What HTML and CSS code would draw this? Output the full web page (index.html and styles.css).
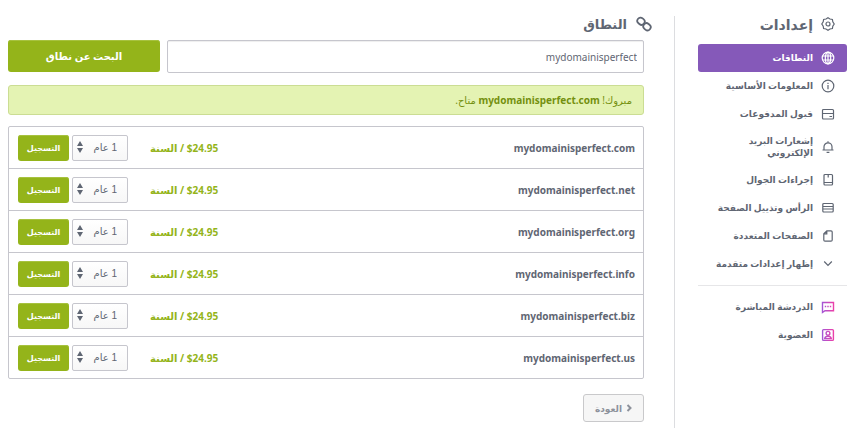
FILE: index.html
```html
<!DOCTYPE html>
<html lang="ar" dir="rtl">
<head>
  <meta charset="UTF-8" />
  <meta name="viewport" content="width=device-width, initial-scale=1.0"/>
  <title>النطاق</title>
  <link rel="stylesheet" href="styles.css">
</head>

<body>
  <div class="page">
    <nav class="sidebar">
      <h2 class="sidebar-title">
        <svg class="icon" viewBox="0 0 14 14"><path d="M7 .7 9 2l2.4.4.4 2.5L13.2 7l-1.4 2.1-.4 2.5L9 12l-2 1.3L5 12l-2.4-.4-.4-2.5L.8 7l1.4-2.1.4-2.5L5 2z"/><circle cx="7" cy="7" r="2"/></svg>
        <span>إعدادات</span>
      </h2>
      <ul class="menu">
        <li><a class="menu-item active" href="#">
          <svg class="icon" viewBox="0 0 14 14"><circle cx="7" cy="7" r="5.8"/><ellipse cx="7" cy="7" rx="2.7" ry="5.8"/><path d="M1.6 5h10.8M1.6 9h10.8M7 1.2v11.6"/></svg>
          <span>النطاقات</span>
        </a></li>
        <li><a class="menu-item" href="#">
          <svg class="icon" viewBox="0 0 14 14"><circle cx="7" cy="7" r="5.8"/><path d="M7 6v4.2M7 3.7v1.2"/></svg>
          <span>المعلومات الأساسية</span>
        </a></li>
        <li><a class="menu-item" href="#">
          <svg class="icon" viewBox="0 0 14 14"><rect x="1.5" y="2.5" width="11" height="9.5" rx="1"/><path d="M1.5 6.5h11M8.500 9.500h2.500"/></svg>
          <span>قبول المدفوعات</span>
        </a></li>
        <li><a class="menu-item" href="#">
          <svg class="icon" viewBox="0 0 14 14"><path d="M1.5 10h11M3 10V6.800a4 4 0 0 1 8 0V10M7 2.800V1.300M5.600 12.300h2.800"/></svg>
          <span>إشعارات البريد<br>الإلكتروني</span>
        </a></li>
        <li><a class="menu-item" href="#">
          <svg class="icon" viewBox="0 0 14 14"><rect x="3" y="1.5" width="8.500" height="10.500" rx="1"/><path d="M3 9.500h8.500M7.200 2v2.500"/></svg>
          <span>إجراءات الجوال</span>
        </a></li>
        <li><a class="menu-item" href="#">
          <svg class="icon" viewBox="0 0 14 14"><rect x="1.8" y="2.5" width="10.4" height="8.500" rx="1"/><path d="M2 5.500h10M2 8h10"/></svg>
          <span>الرأس وتذييل الصفحة</span>
        </a></li>
        <li><a class="menu-item" href="#">
          <svg class="icon" viewBox="0 0 14 14"><path d="M5.8 1.8H10a1.2 1.2 0 0 1 1.2 1.2v8a1.2 1.2 0 0 1-1.2 1.2H4A1.2 1.2 0 0 1 2.8 11V4.8zM5.8 1.8v3h-3"/></svg>
          <span>الصفحات المتعددة</span>
        </a></li>
        <li><a class="menu-item" href="#">
          <svg class="icon" viewBox="0 0 14 14"><path d="m3.2 4.5 3.8 4 3.8-4"/></svg>
          <span>إظهار إعدادات متقدمة</span>
        </a></li>
      </ul>
      <ul class="menu menu-extra">
        <li><a class="menu-item" href="#">
          <svg class="icon icon-pink" viewBox="0 0 14 14">
            <defs><linearGradient id="pink" gradientUnits="userSpaceOnUse" x1="1" y1="0" x2="13" y2="0"><stop offset="0" stop-color="#a157d6"/><stop offset="1" stop-color="#ee3fa8"/></linearGradient></defs>
            <path d="M1.5 12.5v-10h11v8.2H4zM3.8 6.5h1.4M6.3 6.5h1.4M8.8 6.5h1.4"/>
          </svg>
          <span>الدردشة المباشرة</span>
        </a></li>
        <li><a class="menu-item" href="#">
          <svg class="icon icon-pink" viewBox="0 0 14 14"><rect x="1.6" y="1.6" width="10.8" height="10.8" rx="1"/><circle cx="7" cy="5.3" r="1.9"/><path d="M3.7 10.6c.4-1.7 1.6-2.3 3.3-2.3s2.9.6 3.3 2.3z"/></svg>
          <span>العضوية</span>
        </a></li>
      </ul>
    </nav>

    <main class="content">
      <h1 class="title">
        <svg class="link-icon" viewBox="0 0 16 16"><rect x="1.200" y="2" width="7.600" height="6.400" rx="3.200" transform="rotate(40 5 5.200)"/><rect x="7.200" y="7.600" width="7.600" height="6.400" rx="3.200" transform="rotate(40 11 10.800)"/></svg>
        <span>النطاق</span>
      </h1>

      <form class="search">
        <input class="search-input" type="text" value="mydomainisperfect" aria-label="النطاق" />
        <button class="btn search-btn" type="button">البحث عن نطاق</button>
      </form>

      <p class="notice">مبروك! <strong>mydomainisperfect.com</strong> متاح.</p>

      <div class="results">
        <table class="domains">
          <tr>
            <td class="name">mydomainisperfect.com</td>
            <td class="price">$24.95 / السنة</td>
            <td class="years"><div class="select"><select aria-label="mydomainisperfect.com"><option>1 عام</option></select><svg viewBox="0 0 6 12"><path d="M3 0 6 5H0zM3 12 0 7h6z"/></svg></div></td>
            <td class="action"><button class="btn" type="button">التسجيل</button></td>
          </tr>
          <tr>
            <td class="name">mydomainisperfect.net</td>
            <td class="price">$24.95 / السنة</td>
            <td class="years"><div class="select"><select aria-label="mydomainisperfect.net"><option>1 عام</option></select><svg viewBox="0 0 6 12"><path d="M3 0 6 5H0zM3 12 0 7h6z"/></svg></div></td>
            <td class="action"><button class="btn" type="button">التسجيل</button></td>
          </tr>
          <tr>
            <td class="name">mydomainisperfect.org</td>
            <td class="price">$24.95 / السنة</td>
            <td class="years"><div class="select"><select aria-label="mydomainisperfect.org"><option>1 عام</option></select><svg viewBox="0 0 6 12"><path d="M3 0 6 5H0zM3 12 0 7h6z"/></svg></div></td>
            <td class="action"><button class="btn" type="button">التسجيل</button></td>
          </tr>
          <tr>
            <td class="name">mydomainisperfect.info</td>
            <td class="price">$24.95 / السنة</td>
            <td class="years"><div class="select"><select aria-label="mydomainisperfect.info"><option>1 عام</option></select><svg viewBox="0 0 6 12"><path d="M3 0 6 5H0zM3 12 0 7h6z"/></svg></div></td>
            <td class="action"><button class="btn" type="button">التسجيل</button></td>
          </tr>
          <tr>
            <td class="name">mydomainisperfect.biz</td>
            <td class="price">$24.95 / السنة</td>
            <td class="years"><div class="select"><select aria-label="mydomainisperfect.biz"><option>1 عام</option></select><svg viewBox="0 0 6 12"><path d="M3 0 6 5H0zM3 12 0 7h6z"/></svg></div></td>
            <td class="action"><button class="btn" type="button">التسجيل</button></td>
          </tr>
          <tr>
            <td class="name">mydomainisperfect.us</td>
            <td class="price">$24.95 / السنة</td>
            <td class="years"><div class="select"><select aria-label="mydomainisperfect.us"><option>1 عام</option></select><svg viewBox="0 0 6 12"><path d="M3 0 6 5H0zM3 12 0 7h6z"/></svg></div></td>
            <td class="action"><button class="btn" type="button">التسجيل</button></td>
          </tr>
        </table>
      </div>

      <button class="back" type="button">
        <svg viewBox="0 0 6 8"><path d="m1.500 1 3 3-3 3"/></svg>
        <span>العودة</span>
      </button>
    </main>
  </div>
</body>
</html>
```

FILE: styles.css
```css
* {
  box-sizing: border-box;
}

body {
  margin: 0;
  background: #fff;
  color: #5f6673;
  font-family: "Noto Sans", "Open Sans", "DejaVu Sans", sans-serif;
  font-size: 10px;
}

button,
input,
select {
  font-family: inherit;
  font-size: inherit;
  color: inherit;
}

svg {
  flex: none;
  fill: none;
  stroke: currentColor;
}

.page {
  display: flex;
  padding-top: 16px;
}

/* sidebar */
.sidebar {
  flex: none;
  width: 179px;
  min-height: calc(100vh - 16px);
  padding: 0 6px 0 23px;
  border-left: 1px solid #dcdde0;
}

.sidebar-title,
.title {
  display: flex;
  align-items: center;
  margin: 0;
  height: 16px;
  font-size: 14px;
  font-weight: bold;
}

.sidebar-title {
  gap: 8px;
  padding-right: 12px;
  margin-bottom: 12px;
}

.icon {
  width: 14px;
  height: 14px;
  stroke-width: 1.2;
}

.menu {
  list-style: none;
  margin: 0;
  padding: 0;
}

.menu-item {
  display: flex;
  align-items: center;
  gap: 8px;
  min-height: 28px;
  padding: 7px 12px;
  border-radius: 3px;
  color: #5f6673;
  font-size: 9px;
  font-weight: bold;
  line-height: 12px;
  text-decoration: none;
  white-space: nowrap;
}

.menu-item.active {
  background: #8559b9;
  color: #fff;
}

.menu-extra {
  margin-top: 7px;
  padding-top: 7px;
  border-top: 1px solid #e6e6e8;
}

.icon-pink {
  stroke: url(#pink);
  stroke-width: 1.4;
}

/* content */
.content {
  flex: 1;
  min-width: 0;
  padding: 0 30px 0 8px;
}

.title {
  gap: 9px;
  margin: 0 -8px 8px 0;
  font-size: 13px;
}

.link-icon {
  width: 16px;
  height: 16px;
  stroke-width: 1.8;
}

.search {
  display: flex;
  gap: 7px;
}

.search-input {
  flex: 1;
  min-width: 0;
  height: 33px;
  padding: 0 6px;
  border: 1px solid #c6c6cd;
  border-radius: 2px;
  box-shadow: inset 0 1px 1px #eee;
}

.btn {
  border: 0;
  border-radius: 3px;
  background: #94b41a;
  box-shadow: inset 0 1px 0 #a7c23f;
  color: #fff;
  font-weight: bold;
}

.search-btn {
  width: 152px;
  height: 32px;
}

.notice {
  height: 30px;
  margin: 12px 0 11px;
  padding: 0 11px;
  border: 1px solid #cbdd93;
  border-radius: 3px;
  background: #e4f3b3;
  color: #74900f;
  line-height: 28px;
}

.results {
  border: 1px solid #c6c6cd;
  border-radius: 2px;
}

.domains {
  width: 100%;
  border-spacing: 0;
}

.domains td {
  height: 42px;
  padding: 0;
  border-top: 1px solid #c6c6cd;
  font-weight: bold;
}

.domains tr:first-child td {
  height: 41px;
  border-top: 0;
}

.domains .name {
  padding-right: 8px;
}

.domains .price {
  width: 90px;
  padding-left: 22px;
  color: #94b41a;
  text-align: left;
  white-space: nowrap;
}

.domains .years {
  width: 56px;
}

.domains .action {
  width: 63px;
  padding: 0 3px 0 9px;
}

.action .btn {
  display: block;
  width: 51px;
  height: 26px;
  padding: 0;
  font-size: 8px;
}

.select {
  position: relative;
}

.select select {
  display: block;
  appearance: none;
  width: 100%;
  height: 26px;
  padding: 0 10px 0 14px;
  border: 1px solid #c6c6cd;
  border-radius: 2px;
  background: linear-gradient(#fff, #f7f7f7);
  font-family: "Liberation Sans", "DejaVu Sans", sans-serif;
}

.select svg {
  position: absolute;
  left: 5px;
  top: 6px;
  width: 6px;
  height: 12px;
  fill: #5f6673;
  stroke: none;
  pointer-events: none;
}

.back {
  display: flex;
  align-items: center;
  justify-content: center;
  gap: 4px;
  width: 61px;
  height: 28px;
  margin-top: 15px;
  padding: 0;
  border: 1px solid #c9c9cb;
  border-radius: 3px;
  background: #f6f6f6;
  color: #8d919b;
  font-size: 9px;
  font-weight: bold;
}

.back svg {
  width: 6px;
  height: 8px;
  stroke-width: 2;
}
```
